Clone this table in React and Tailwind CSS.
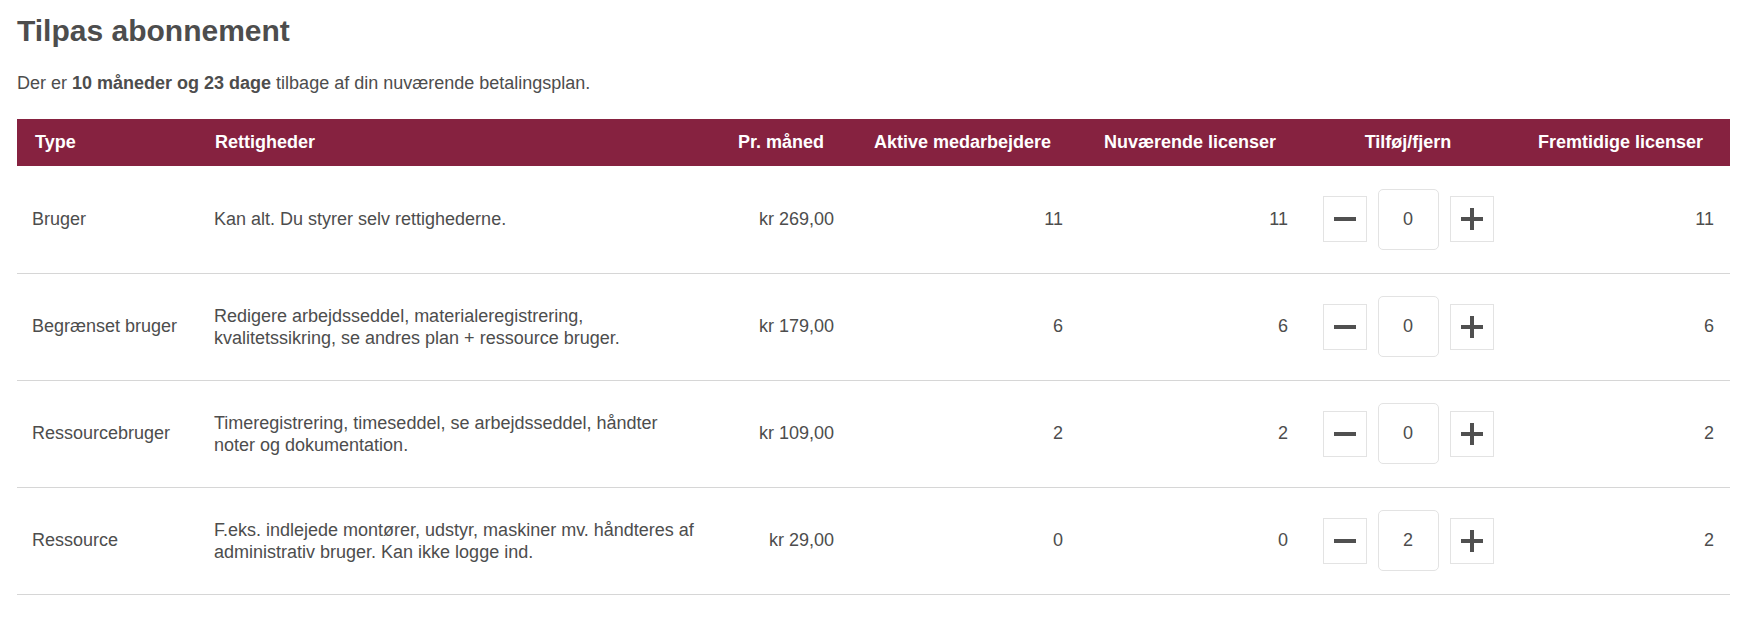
import React, { useState } from 'react';

const rows = [
  { type: 'Bruger', rights: 'Kan alt. Du styrer selv rettighederne.', price: 'kr 269,00', active: 11, current: 11, change: 0 },
  { type: 'Begrænset bruger', rights: 'Redigere arbejdsseddel, materialeregistrering, kvalitetssikring, se andres plan + ressource bruger.', price: 'kr 179,00', active: 6, current: 6, change: 0 },
  { type: 'Ressourcebruger', rights: 'Timeregistrering, timeseddel, se arbejdsseddel, håndter noter og dokumentation.', price: 'kr 109,00', active: 2, current: 2, change: 0 },
  { type: 'Ressource', rights: 'F.eks. indlejede montører, udstyr, maskiner mv. håndteres af administrativ bruger. Kan ikke logge ind.', price: 'kr 29,00', active: 0, current: 0, change: 2 },
];

function MinusIcon() {
  return (
    <svg width="22" height="22" viewBox="0 0 22 22">
      <rect x="0" y="9" width="22" height="4" fill="#505050" />
    </svg>
  );
}

function PlusIcon() {
  return (
    <svg width="22" height="22" viewBox="0 0 22 22">
      <rect x="0" y="9" width="22" height="4" fill="#505050" />
      <rect x="9" y="0" width="4" height="22" fill="#505050" />
    </svg>
  );
}

function Stepper({ value, onChange }) {
  return (
    <div className="flex items-center justify-center gap-[11px]">
      <button
        onClick={() => onChange(value - 1)}
        className="w-[44px] h-[46px] flex items-center justify-center bg-white border border-[#e3e3e3]"
      >
        <MinusIcon />
      </button>
      <input
        readOnly
        value={value}
        className="w-[61px] h-[61px] rounded-[5px] border border-[#e3e3e3] bg-white text-center text-[18px] text-[#4d4d4d] outline-none"
      />
      <button
        onClick={() => onChange(value + 1)}
        className="w-[44px] h-[46px] flex items-center justify-center bg-white border border-[#e3e3e3]"
      >
        <PlusIcon />
      </button>
    </div>
  );
}

export default function App() {
  const [changes, setChanges] = useState(rows.map((r) => r.change));

  const setChange = (i, v) => {
    const next = [...changes];
    next[i] = v;
    setChanges(next);
  };

  return (
    <div className="min-h-screen bg-white pl-[17px] pr-[22px] pt-[14px] text-[#4d4d4d]" style={{ fontFamily: '"Liberation Sans", Arial, sans-serif' }}>
      <h1 className="m-0 text-[30px] font-bold leading-[34px] text-[#4d4d4d]">Tilpas abonnement</h1>
      <p className="mt-[25px] text-[18px] leading-[21px]">
        Der er <b>10 måneder og 23 dage</b> tilbage af din nuværende betalingsplan.
      </p>

      <table className="mt-[25px] w-[1713px] table-fixed border-collapse text-[18px]">
        <thead>
          <tr className="bg-[#862240] text-white h-[47px]">
            <th className="w-[181px] pl-[18px] text-left font-bold">Type</th>
            <th className="w-[540px] pl-[17px] text-left font-bold">Rettigheder</th>
            <th className="w-[112px] pr-[28px] text-right font-bold whitespace-nowrap">Pr. måned</th>
            <th className="w-[229px] pr-[28px] text-right font-bold whitespace-nowrap">Aktive medarbejdere</th>
            <th className="w-[225px] pr-[28px] text-right font-bold whitespace-nowrap">Nuværende licenser</th>
            <th className="w-[208px] text-center font-bold whitespace-nowrap">Tilføj/fjern</th>
            <th className="w-[218px] pr-[27px] text-right font-bold whitespace-nowrap">Fremtidige licenser</th>
          </tr>
        </thead>
        <tbody>
          {rows.map((r, i) => (
            <tr key={r.type} className="h-[107px] border-b border-[#d6d6d6]">
              <td className="pl-[15px] align-middle">{r.type}</td>
              <td className="pl-[16px] pr-[39px] leading-[22px] align-middle">{r.rights}</td>
              <td className="pr-[16px] text-right align-middle whitespace-nowrap">{r.price}</td>
              <td className="pr-[16px] text-right align-middle">{r.active}</td>
              <td className="pr-[16px] text-right align-middle">{r.current}</td>
              <td className="align-middle">
                <Stepper value={changes[i]} onChange={(v) => setChange(i, v)} />
              </td>
              <td className="pr-[16px] text-right align-middle">{r.current + changes[i]}</td>
            </tr>
          ))}
        </tbody>
      </table>
    </div>
  );
}
